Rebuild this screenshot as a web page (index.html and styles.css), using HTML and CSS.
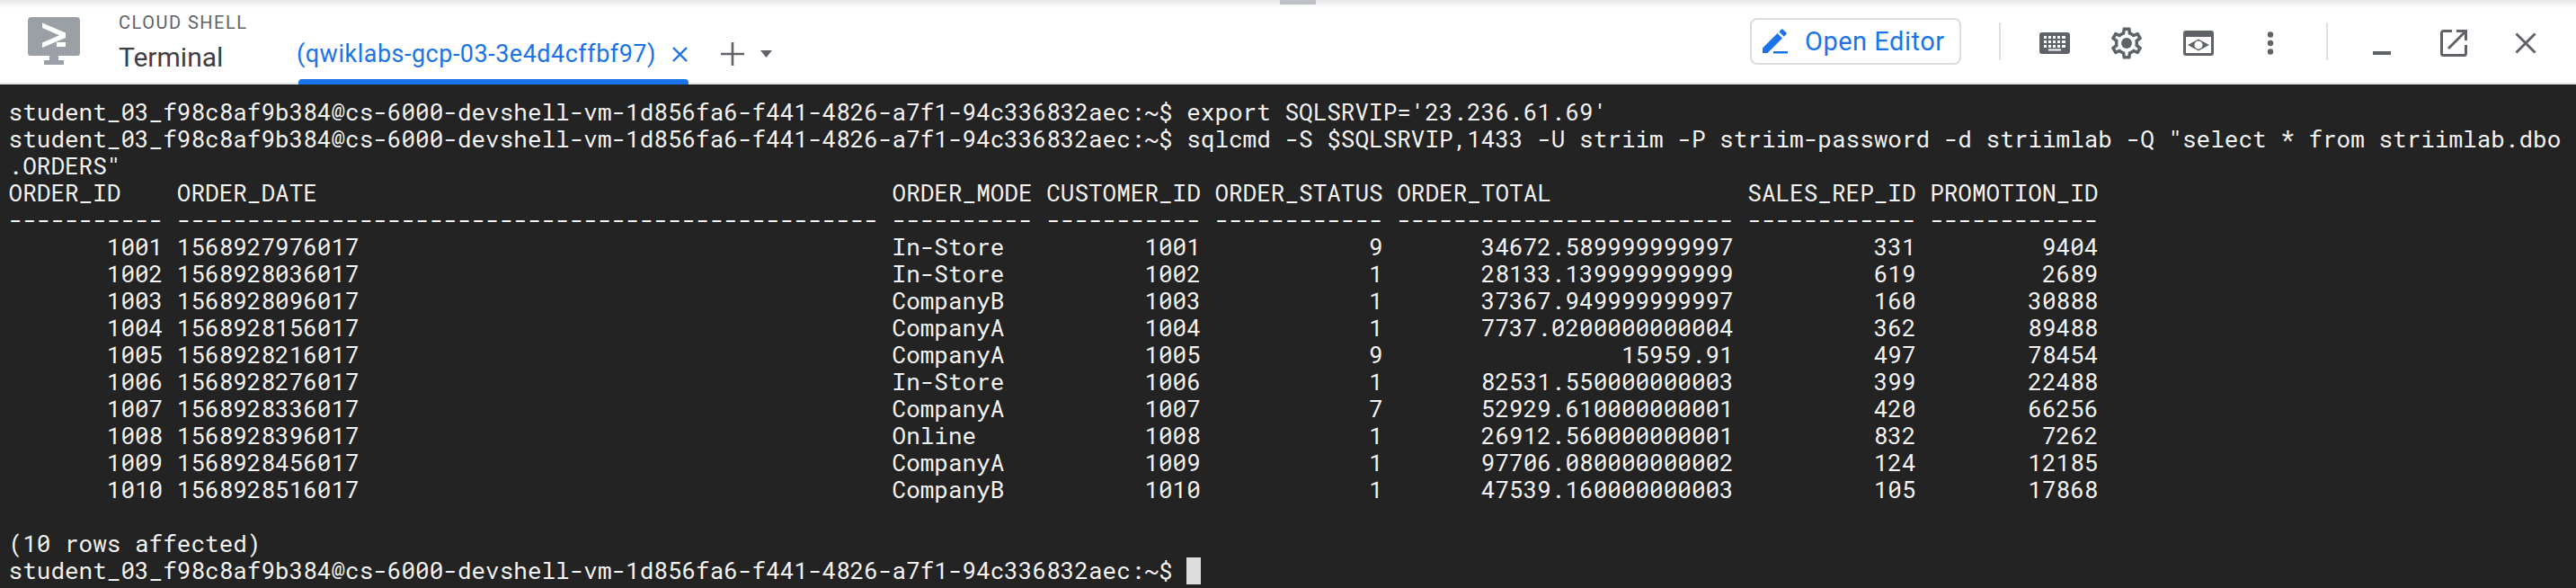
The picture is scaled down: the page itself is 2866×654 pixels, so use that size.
FILE: index.html
```html
<!DOCTYPE html>
<html lang="en">
<head>
<meta charset="utf-8">
<title>Cloud Shell Terminal</title>
<link rel="stylesheet" href="styles.css">
</head>
<body>
<div class="shell">
  <div class="handle"></div>
  <header class="bar">
    <svg class="logo" viewBox="0 0 58 53" width="58" height="53">
      <path fill="#9aa0a6" d="M4 0h50a4 4 0 0 1 4 4v36a3 3 0 0 1-3 3H3a3 3 0 0 1-3-3V4a4 4 0 0 1 4-4zM24 43h10v5H24zM18 48h22v5H18z"/>
      <path fill="#fff" d="M16 6.500l26 11v5.500l-26 11v-5.500l19-8.300-19-8.200zM32 28h10v5H32z"/>
    </svg>
    <div class="titles">
      <div class="eyebrow">CLOUD SHELL</div>
      <div class="heading">Terminal</div>
    </div>
    <div class="tabs">
      <div class="tab">
        <span class="tab-label">(qwiklabs-gcp-03-3e4d4cffbf97)</span>
        <svg class="tab-close" viewBox="0 0 19 19" width="19" height="19"><path d="M2 2l15 15M17 2L2 17" stroke="#1a73e8" stroke-width="2.400" fill="none"/></svg>
      </div>
      <svg class="plus" viewBox="0 0 26 26" width="26" height="26"><path d="M13 0v26M0 13h26" stroke="#5f6368" stroke-width="2.600" fill="none"/></svg>
      <svg class="caret" viewBox="0 0 13 8" width="13" height="8"><path d="M0 0h13L6.500 8z" fill="#5f6368"/></svg>
    </div>
    <div class="actions">
      <button class="editor">
        <svg viewBox="0 0 28 28" width="28" height="28"><path fill="#1a73e8" d="M0 21.500L16.500 5l5.500 5.500L5.500 27H0zM18.300 3.200L21 .5a1 1 0 0 1 1.400 0l4.100 4.100a1 1 0 0 1 0 1.400l-2.700 2.700zM12 25h16v2.500H12z"/></svg>
        <span>Open Editor</span>
      </button>
      <div class="sep"></div>
      <div class="icon"><svg viewBox="0 0 34 24" width="34" height="24">
        <path fill="#5f6368" fill-rule="evenodd" d="M3 0h28a3 3 0 0 1 3 3v18a3 3 0 0 1-3 3H3a3 3 0 0 1-3-3V3a3 3 0 0 1 3-3zM5 4v3h3V4zm5 0v3h3V4zm5 0v3h3V4zm5 0v3h3V4zm5 0v3h4V4zM5 9v3h3V9zm5 0v3h3V9zm5 0v3h3V9zm5 0v3h3V9zm5 0v3h4V9zM5 14v3h3v-3zm5 0v3h3v-3zm5 0v3h3v-3zm5 0v3h3v-3zm5 0v3h4v-3zM10 18.500v2h14v-2z"/></svg></div>
      <div class="icon"><svg viewBox="0 0 24 24" width="42" height="42">
        <path fill="#5f6368" d="M19.430 12.980c.04-.32.07-.64.07-.98 0-.34-.03-.66-.07-.98l2.110-1.650c.19-.15.24-.42.12-.64l-2-3.460c-.09-.16-.26-.25-.44-.25-.06 0-.12.01-.17.03l-2.490 1c-.52-.4-1.080-.73-1.690-.98l-.38-2.650C14.460 2.180 14.250 2 14 2h-4c-.25 0-.46.18-.49.42l-.38 2.650c-.61.25-1.170.59-1.690.98l-2.490-1c-.06-.02-.12-.03-.18-.03-.17 0-.34.09-.43.25l-2 3.460c-.13.22-.07.49.12.64l2.110 1.650c-.04.32-.07.65-.07.98 0 .33.03.66.07.98l-2.110 1.650c-.19.15-.24.42-.12.64l2 3.460c.09.16.26.25.44.25.06 0 .12-.01.17-.03l2.490-1c.52.4 1.080.73 1.690.98l.38 2.650c.03.24.24.42.49.42h4c.25 0 .46-.18.49-.42l.38-2.650c.61-.25 1.170-.59 1.690-.98l2.490 1c.06.02.12.03.18.03.17 0 .34-.09.43-.25l2-3.460c.12-.22.07-.49-.12-.64l-2.110-1.650zm-1.980-1.710c.04.31.05.52.05.73 0 .21-.02.43-.05.73l-.14 1.130.89.7 1.080.84-.7 1.210-1.270-.51-1.040-.42-.9.68c-.43.32-.84.56-1.250.73l-1.060.43-.16 1.130-.2 1.350h-1.400l-.19-1.350-.16-1.130-1.060-.43c-.43-.18-.83-.41-1.230-.71l-.91-.7-1.060.43-1.270.51-.7-1.210 1.080-.84.89-.7-.14-1.130c-.03-.31-.05-.54-.05-.74s.02-.43.05-.73l.14-1.130-.89-.7-1.080-.84.7-1.210 1.270.51 1.040.42.9-.68c.43-.32.84-.56 1.250-.73l1.060-.43.16-1.130.2-1.350h1.390l.19 1.350.16 1.130 1.060.43c.43.18.83.41 1.230.71l.91.7 1.060-.43 1.270-.51.7 1.210-1.070.85-.89.7.14 1.130z"/>
        <circle cx="12" cy="12" r="3.400" fill="#5f6368"/></svg></div>
      <div class="icon"><svg viewBox="0 0 34 28" width="34" height="28">
        <path fill="#5f6368" fill-rule="evenodd" d="M3 0h28a3 3 0 0 1 3 3v22a3 3 0 0 1-3 3H3a3 3 0 0 1-3-3V3a3 3 0 0 1 3-3zM3 7v18h28V7zM5 16l12-6.500L29 16l-12 6.500zm7.500 0a4.500 4.500 0 0 0 9 0a4.500 4.500 0 0 0-9 0z"/></svg></div>
      <div class="icon"><svg viewBox="0 0 8 26" width="8" height="26"><circle cx="4" cy="3.500" r="3.200" fill="#5f6368"/><circle cx="4" cy="13" r="3.200" fill="#5f6368"/><circle cx="4" cy="22.500" r="3.200" fill="#5f6368"/></svg></div>
      <div class="sep"></div>
      <div class="icon"><svg class="min" viewBox="0 0 20 4" width="20" height="4"><path fill="#5f6368" d="M0 0h20v4H0z"/></svg></div>
      <div class="icon"><svg viewBox="0 0 30 30" width="30" height="30"><path fill="none" stroke="#5f6368" stroke-width="3" d="M13 1.500H3.500a2 2 0 0 0-2 2v23a2 2 0 0 0 2 2h23a2 2 0 0 0 2-2V17"/><path fill="none" stroke="#5f6368" stroke-width="3" d="M18 1.500h10.500V12M28 2L9 21"/></svg></div>
      <div class="icon"><svg viewBox="0 0 24 24" width="24" height="24"><path d="M1.500 1.500l21 21M22.500 1.500l-21 21" stroke="#5f6368" stroke-width="3" fill="none"/></svg></div>
    </div>
  </header>
  <pre class="terminal">student_03_f98c8af9b384@cs-6000-devshell-vm-1d856fa6-f441-4826-a7f1-94c336832aec:~$ export SQLSRVIP='23.236.61.69'
student_03_f98c8af9b384@cs-6000-devshell-vm-1d856fa6-f441-4826-a7f1-94c336832aec:~$ sqlcmd -S $SQLSRVIP,1433 -U striim -P striim-password -d striimlab -Q "select * from striimlab.dbo
.ORDERS"
ORDER_ID    ORDER_DATE                                         ORDER_MODE CUSTOMER_ID ORDER_STATUS ORDER_TOTAL              SALES_REP_ID PROMOTION_ID
----------- -------------------------------------------------- ---------- ----------- ------------ ------------------------ ------------ ------------
       1001 1568927976017                                      In-Store          1001            9       34672.589999999997          331         9404
       1002 1568928036017                                      In-Store          1002            1       28133.139999999999          619         2689
       1003 1568928096017                                      CompanyB          1003            1       37367.949999999997          160        30888
       1004 1568928156017                                      CompanyA          1004            1       7737.0200000000004          362        89488
       1005 1568928216017                                      CompanyA          1005            9                 15959.91          497        78454
       1006 1568928276017                                      In-Store          1006            1       82531.550000000003          399        22488
       1007 1568928336017                                      CompanyA          1007            7       52929.610000000001          420        66256
       1008 1568928396017                                      Online            1008            1       26912.560000000001          832         7262
       1009 1568928456017                                      CompanyA          1009            1       97706.080000000002          124        12185
       1010 1568928516017                                      CompanyB          1010            1       47539.160000000003          105        17868

(10 rows affected)
student_03_f98c8af9b384@cs-6000-devshell-vm-1d856fa6-f441-4826-a7f1-94c336832aec:~$ <span class="cursor"></span></pre>
</div>
</body>
</html>
```
FILE: styles.css
```css
* { box-sizing: border-box; }
html, body { margin: 0; height: 100%; }
body { overflow: hidden; background: #232323; font-family: Roboto, "Liberation Sans", sans-serif; }
.shell { position: relative; display: flex; flex-direction: column; height: 654px; }
.handle { position: absolute; top: 0; left: 1424px; width: 40px; height: 5px; background: #bdc1c6; z-index: 2; }
.bar {
  display: flex; align-items: center; height: 94px; flex: none;
  padding: 4px 16px 0 31px;
  background: linear-gradient(#e6e6e6 0, #fbfbfb 7px, #fff 10px);
  border-bottom: 2px solid #e3e5e9;
}
.logo { flex: none; margin: 0 43px 6px 0; }
.titles { width: 198px; flex: none; display: flex; flex-direction: column; margin-bottom: 2px; }
.eyebrow { font-size: 20px; line-height: 24px; letter-spacing: 1.500px; color: #5f6368; }
.heading { font-size: 30px; line-height: 36px; margin-top: 9px; color: #3c4043; }
.tabs { display: flex; align-items: center; align-self: stretch; padding-top: 24px; }
.tab { position: relative; display: flex; align-items: center; align-self: stretch; gap: 17px; }
.tab::after {
  content: ""; position: absolute; left: 2px; right: 0; bottom: -2px; height: 6px;
  background: #1a73e8; border-radius: 4px 4px 0 0;
}
.tab-label { font-size: 27px; letter-spacing: .5px; color: #1a73e8; white-space: nowrap; }
.plus { margin-left: 36px; }
.caret { margin-left: 18px; }
.actions { display: flex; align-items: center; margin-left: auto; }
.editor {
  display: flex; align-items: center; gap: 19px; width: 235px; height: 52px; padding: 0 0 0 12px; margin: 0 20px 4px 0;
  background: #fff; border: 2px solid #dadce0; border-radius: 8px;
  font: 29px Roboto, "Liberation Sans", sans-serif; letter-spacing: .5px; color: #1a73e8;
}
.sep { width: 2px; height: 42px; margin: 0 20px 4px 22px; background: #e0e0e0; }
.icon { display: flex; align-items: center; justify-content: center; width: 80px; height: 48px; }
.min { margin-top: 22px; }
.terminal {
  flex: 1; margin: 0; padding: 15px 0 0 9.600px; overflow: hidden;
  background: #232323; color: #f4f4f4;
  font-family: "Roboto Mono", "DejaVu Sans Mono", monospace; font-size: 26px; line-height: 30px;
  white-space: pre;
}
.cursor { display: inline-block; width: 16px; height: 30px; margin-top: 1px; background: #ddd; vertical-align: top; }
```
